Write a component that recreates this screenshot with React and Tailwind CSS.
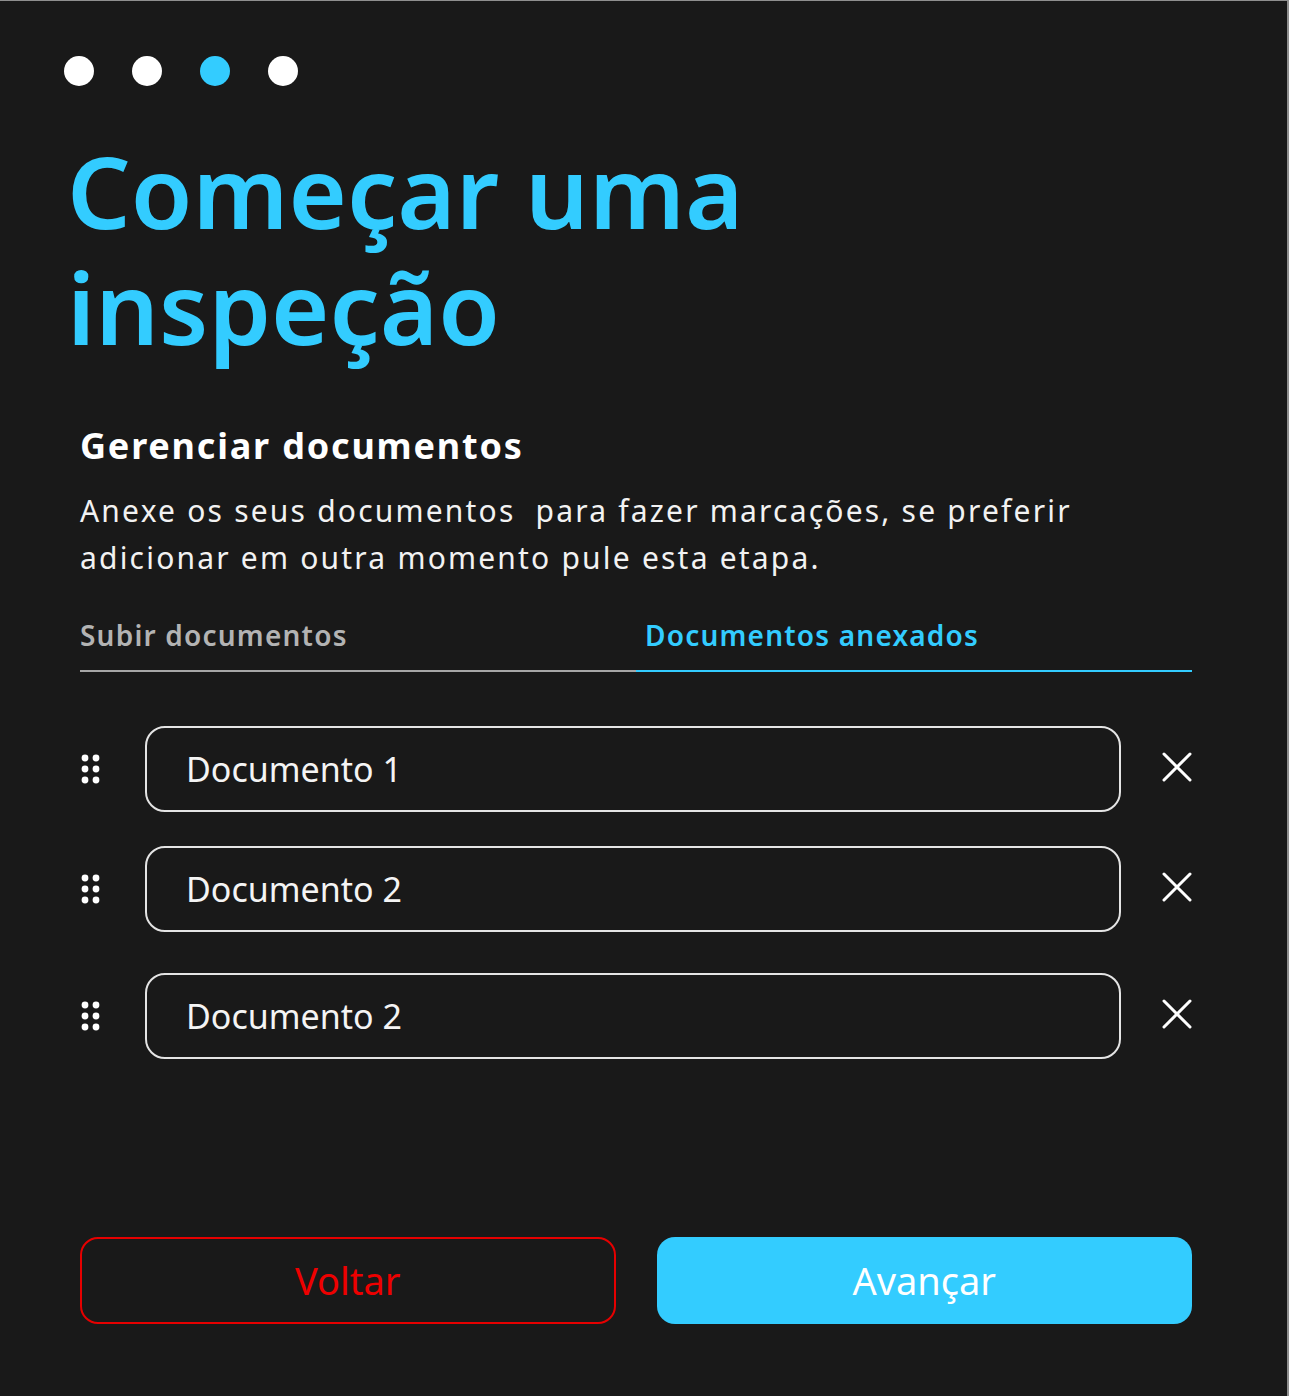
import { useState } from 'react'

// Passo 3 do assistente de inspeção: gestão dos documentos anexados.

const FONT = { fontFamily: '"Noto Sans", "Open Sans", sans-serif' }

const DOCS = [
  { id: 1, name: 'Documento 1', gap: 'mt-[54px]' },
  { id: 2, name: 'Documento 2', gap: 'mt-[34px]' },
  { id: 3, name: 'Documento 2', gap: 'mt-[41px]' },
]

function DragHandle() {
  return (
    <svg width="20" height="32" viewBox="0 0 20 32" className="shrink-0 text-white" aria-hidden>
      {[5, 16, 27].map((cy) =>
        [5, 16].map((cx) => <circle key={`${cx}-${cy}`} cx={cx} cy={cy} r="3.4" fill="currentColor" />),
      )}
    </svg>
  )
}

function CloseIcon() {
  return (
    <svg width="30" height="30" viewBox="0 0 30 30" className="text-white" aria-hidden>
      <path d="M2 2 L28 28 M28 2 L2 28" stroke="currentColor" strokeWidth="3" strokeLinecap="round" />
    </svg>
  )
}

function DocRow({ doc, onRemove }) {
  return (
    <div className={`flex items-center ${doc.gap}`}>
      <DragHandle />
      <div className="ml-[45px] flex h-[86px] flex-1 items-center rounded-[20px] border-2 border-[#e4e4e4] pl-[39px] text-[34px] text-[#f4f4f4]">
        {doc.name}
      </div>
      <button type="button" onClick={() => onRemove(doc.id)} className="ml-[41px] -translate-y-[2px] shrink-0">
        <CloseIcon />
      </button>
    </div>
  )
}

export default function App() {
  const [docs, setDocs] = useState(DOCS)
  const [tab, setTab] = useState('anexados')

  return (
    <div
      className="flex h-[1396px] w-[1289px] flex-col border-t border-r-2 border-[#8f8f8f] bg-[#191919] pl-[80px] pr-[95px]"
      style={FONT}
    >
      {/* Indicador de passos */}
      <div className="ml-[-16px] mt-[55px] flex gap-[38px]">
        {[0, 1, 2, 3].map((i) => (
          <span key={i} className={`h-[30px] w-[30px] rounded-full ${i === 2 ? 'bg-[#33ccff]' : 'bg-white'}`} />
        ))}
      </div>

      <h1 className="ml-[-13px] mt-[46px] text-[100px] font-semibold leading-[116px] text-[#33ccff]">
        Começar uma
        <br />
        inspeção
      </h1>

      <h2 className="mt-[60px] text-[36px] font-bold leading-[44px] tracking-[1.8px] text-white">
        Gerenciar documentos
      </h2>
      <p className="mt-[19px] text-[30px] leading-[47px] tracking-[2.2px] text-[#f2f2f2]">
        Anexe os seus documentos&nbsp; para fazer marcações, se preferir
        <br />
        adicionar em outra momento pule esta etapa.
      </p>

      {/* Abas */}
      <div className="mt-[36px] grid grid-cols-2">
        <button
          type="button"
          onClick={() => setTab('subir')}
          className={`border-b-2 pb-[17px] text-left text-[28px] font-semibold leading-[36px] tracking-[1.2px] ${
            tab === 'subir' ? 'border-[#33ccff] text-[#33ccff]' : 'border-[#a6a6a6] text-[#b3b3b3]'
          }`}
        >
          Subir documentos
        </button>
        <button
          type="button"
          onClick={() => setTab('anexados')}
          className={`border-b-2 pb-[17px] pl-[9px] text-left text-[28px] font-semibold leading-[36px] tracking-[1.2px] ${
            tab === 'anexados' ? 'border-[#33ccff] text-[#33ccff]' : 'border-[#a6a6a6] text-[#b3b3b3]'
          }`}
        >
          Documentos anexados
        </button>
      </div>

      {docs.map((doc) => (
        <DocRow key={doc.id} doc={doc} onRemove={(id) => setDocs((d) => d.filter((x) => x.id !== id))} />
      ))}

      <div className="mb-[72px] mt-auto grid grid-cols-2 gap-[41px]">
        <button
          type="button"
          className="h-[87px] rounded-[18px] border-2 border-[#e60000] text-[38px] text-[#ee0000]"
        >
          Voltar
        </button>
        <button type="button" className="h-[87px] rounded-[18px] bg-[#33ccff] text-[38px] text-white">
          Avançar
        </button>
      </div>
    </div>
  )
}
